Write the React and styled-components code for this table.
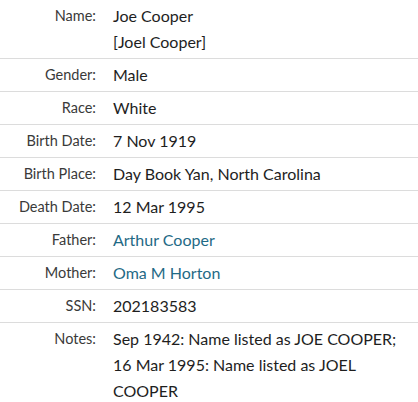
import React from "react";
import styled, { createGlobalStyle } from "styled-components";

const GlobalStyle = createGlobalStyle`
    body {
        margin: 0;
        background: #fff;
        font-family: Lato, "Open Sans", sans-serif;
    }
`;

const facts = [
    { label: "Name", lines: ["Joe Cooper", "[Joel Cooper]"] },
    { label: "Gender", value: "Male" },
    { label: "Race", value: "White" },
    { label: "Birth Date", value: "7 Nov 1919" },
    { label: "Birth Place", value: "Day Book Yan, North Carolina" },
    { label: "Death Date", value: "12 Mar 1995" },
    { label: "Father", value: "Arthur Cooper", link: true },
    { label: "Mother", value: "Oma M Horton", link: true },
    { label: "SSN", value: "202183583" },
    {
        label: "Notes",
        value: "Sep 1942: Name listed as JOE COOPER; 16 Mar 1995: Name listed as JOEL COOPER",
    },
];

const App = () => {
    return (
        <>
            <GlobalStyle />
            <Table>
                {facts.map((fact) => (
                    <Row key={fact.label}>
                        <Label>{fact.label}:</Label>
                        <Value>
                            {fact.lines ? (
                                fact.lines.map((line) => <div key={line}>{line}</div>)
                            ) : fact.link ? (
                                <Link href="#">{fact.value}</Link>
                            ) : (
                                fact.value
                            )}
                        </Value>
                    </Row>
                ))}
            </Table>
        </>
    );
};

export default App;

const Table = styled.div`
    width: 418px;
`;

const Row = styled.div`
    display: grid;
    grid-template-columns: 96px 1fr;
    column-gap: 17px;
    padding: 3px 0;
    border-bottom: 1px solid #dcdcdc;
    line-height: 26px;

    &:last-child {
        border-bottom: none;
    }
`;

const Label = styled.div`
    text-align: right;
    font-size: 14.5px;
    color: #3a3a3a;
`;

const Value = styled.div`
    font-size: 16px;
    color: #1e1e1e;
    padding-right: 10px;
`;

const Link = styled.a`
    color: #1f6a86;
    text-decoration: none;
`;
